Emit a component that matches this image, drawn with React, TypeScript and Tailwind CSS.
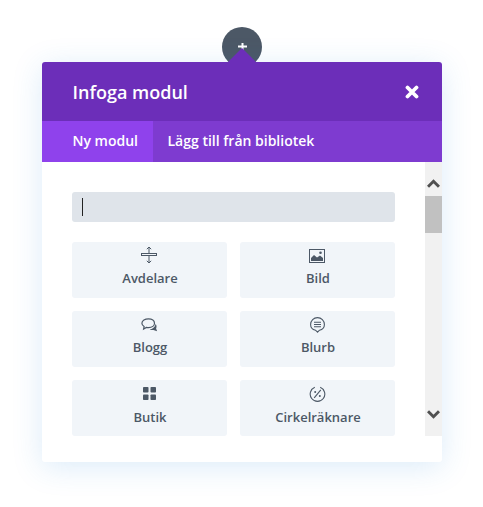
import { ReactNode } from "react";

const Divider = (
  <svg width="16" height="18" viewBox="0 0 16 18" fill="none" stroke="#4c5866" strokeWidth="1">
    <path d="M8 1v6M8 10v7M5.800 3.200L8 1l2.200 2.200M5.800 14.800L8 17l2.200-2.200" />
    <rect x="0.500" y="7.500" width="15" height="2" />
  </svg>
);

const Picture = (
  <svg className="mt-0.5" width="16" height="14" viewBox="0 0 16 14">
    <rect x="0.500" y="0.500" width="15" height="13" fill="none" stroke="#4c5866" />
    <path d="M2 12V9l3-3 3 2.500 3-2 3 2.500v3z" fill="#4c5866" />
    <circle cx="11.500" cy="3.800" r="1.300" fill="#4c5866" />
  </svg>
);

const Bubbles = (
  <svg className="mt-px" width="17" height="14" viewBox="0 0 17 14" fill="none" stroke="#4c5866" strokeWidth="1.200">
    <path d="M7.500 .8c3.500 0 6 1.900 6 4.400s-2.500 4.400-6 4.400c-.8 0-1.500-.1-2.100-.2L2.600 11l.5-2.500C1.700 7.700.9 6.500.9 5.200.9 2.700 4 .8 7.500.8z" />
    <path d="M14.600 6c1.100 1.300 1.200 3 .5 4.400l1 2.800-3.700-1.300c-1.300.4-2.600.2-3.700-.4 2.800-.3 5.400-2.200 5.900-5.500z" fill="#4c5866" stroke="none" />
  </svg>
);

const Quote = (
  <svg className="mt-px" width="15" height="16" viewBox="0 0 15 16" fill="none" stroke="#4c5866" strokeWidth="1.100">
    <path d="M7.500 15.200l-2-2C2.700 12.600.6 10.300.6 7.500a6.900 6.900 0 0 1 13.800 0c0 2.800-2.100 5.100-4.900 5.700z" />
    <path d="M4 5.300h7M4 7.500h7M4 9.700h7" />
  </svg>
);

const Grid = (
  <svg width="13" height="13" viewBox="0 0 13 13" fill="#4c5866">
    <rect x="0" y="0" width="5.500" height="5.500" rx="0.800" />
    <rect x="7.500" y="0" width="5.500" height="5.500" rx="0.800" />
    <rect x="0" y="7.500" width="5.500" height="5.500" rx="0.800" />
    <rect x="7.500" y="7.500" width="5.500" height="5.500" rx="0.800" />
  </svg>
);

const Percent = (
  <svg className="mt-px" width="17" height="16" viewBox="0 0 17 16" fill="none" stroke="#4c5866" strokeWidth="1.100">
    <path d="M11.200 1.300A7.300 7.300 0 1 1 5.800 1.300" />
    <path d="M11.800 3.800l-6.600 8" />
    <circle cx="6.200" cy="6" r="1" fill="#4c5866" stroke="none" />
    <circle cx="10.800" cy="10" r="1" fill="#4c5866" stroke="none" />
  </svg>
);

const modules: { name: string; icon: ReactNode; lastRow?: boolean }[] = [
  { name: "Avdelare", icon: Divider },
  { name: "Bild", icon: Picture },
  { name: "Blogg", icon: Bubbles },
  { name: "Blurb", icon: Quote },
  { name: "Butik", icon: Grid, lastRow: true },
  { name: "Cirkelräknare", icon: Percent, lastRow: true },
];

function ModuleCard({ name, icon, lastRow }: { name: string; icon: ReactNode; lastRow?: boolean }) {
  return (
    <div className="h-14 rounded-[3px] bg-[#f1f5f9] flex flex-col items-center">
      <div className="h-[26px] flex items-center justify-center">{icon}</div>
      <div className={lastRow ? "pl-0.5 pt-px text-[13px] leading-5 font-semibold text-[#4c5866]" : "pl-0.5 text-[13px] leading-5 font-semibold text-[#4c5866]"}>
        {name}
      </div>
    </div>
  );
}

export default function App() {
  return (
    <div className="w-[483px] h-[507px] bg-white flex flex-col items-center overflow-hidden font-['Open_Sans',sans-serif]">
      {/* plus button */}
      <div className="mt-[27px] w-10 h-10 -mb-[5px] rounded-full bg-[#4c5866] flex items-center justify-center">
        <svg width="10" height="10" viewBox="0 0 10 10" stroke="white" strokeWidth="2">
          <path d="M1 4.500h9M5.500 1v8" />
        </svg>
      </div>

      <div className="relative w-[400px] h-[400px] rounded-[3px] bg-white shadow-[0_5px_30px_rgba(43,135,218,0.17)] flex flex-col">
        {/* arrow */}
        <div className="absolute left-[186px] -top-[14px] w-0 h-0 border-x-[14px] border-x-transparent border-b-[14px] border-b-[#6c2eb9]" />

        <div className="h-[59px] rounded-t-[3px] bg-[#6c2eb9] pl-[31px] pr-[23px] flex items-center justify-between">
          <span className="text-white text-lg font-semibold">Infoga modul</span>
          <svg width="14" height="14" viewBox="0 0 14 14" stroke="white" strokeWidth="3.800" strokeLinecap="round">
            <path d="M2.500 2.500l9 9M11.500 2.500l-9 9" />
          </svg>
        </div>

        <div className="h-[41px] bg-[#7e3bd0] flex text-white text-sm font-semibold leading-10">
          <div className="w-[111px] pl-[31px] bg-[#8f42ec]">Ny modul</div>
          <div className="pl-[15px]">Lägg till från bibliotek</div>
        </div>

        <div className="h-[274px] flex">
          <div className="w-[383px] pt-[30px] pl-[30px] pr-[30px] overflow-hidden">
            <div className="h-[30px] rounded-[3px] bg-[#dfe4ea] flex items-center pl-2.5">
              <div className="w-px h-[18px] bg-[#222]" />
            </div>
            <div className="mt-5 grid grid-cols-2 gap-x-[13px] gap-y-[13px]">
              {modules.map((m) => (
                <ModuleCard key={m.name} name={m.name} icon={m.icon} lastRow={m.lastRow} />
              ))}
            </div>
          </div>

          {/* scrollbar */}
          <div className="w-[17px] bg-[#f1f1f1] flex flex-col items-center justify-between">
            <div className="w-full flex flex-col">
              <div className="h-[34px] pt-[17px] flex items-start justify-center">
                <svg width="13" height="9" viewBox="0 0 13 9" fill="none" stroke="#505050" strokeWidth="3">
                  <path d="M1 7.800l5.500-5.500 5.500 5.500" />
                </svg>
              </div>
              <div className="h-[37px] bg-[#c1c1c1]" />
            </div>
            <div className="h-[44px] flex items-center justify-center">
              <svg width="13" height="9" viewBox="0 0 13 9" fill="none" stroke="#505050" strokeWidth="3">
                <path d="M1 1.200l5.500 5.500 5.500-5.500" />
              </svg>
            </div>
          </div>
        </div>
      </div>
    </div>
  );
}
